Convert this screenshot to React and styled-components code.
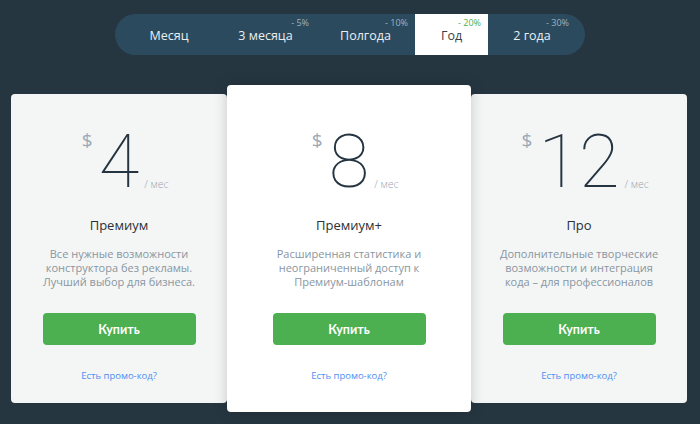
import React from "react";
import styled, { createGlobalStyle } from "styled-components";

const Global = createGlobalStyle`
  html, body { margin: 0; padding: 0; background: #263641; }
  body { font-family: "Open Sans", "Liberation Sans", sans-serif; width: 700px; height: 424px; overflow: hidden; }
`;

const Page = styled.div`
  display: flex;
  flex-direction: column;
  align-items: center;
  padding-top: 14px;
`;

const Tabs = styled.div`
  display: flex;
  height: 41px;
  padding: 0 9px 0 8px;
  border-radius: 21px;
  background: #2c4a5d;
`;

const Tab = styled.div`
  position: relative;
  display: flex;
  align-items: center;
  justify-content: center;
  width: ${(p) => p.$w}px;
  padding-top: 1px;
  box-sizing: border-box;
  font-size: 12.5px;
  color: ${(p) => (p.$active ? "#3a3f44" : "#e9eff3")};
  background: ${(p) => (p.$active ? "#ffffff" : "transparent")};
`;

const Discount = styled.span`
  position: absolute;
  top: 2px;
  right: 7px;
  font-size: 9px;
  color: ${(p) => (p.$active ? "#4caf50" : "#9fb2c0")};
`;

const Cards = styled.div`
  display: flex;
  align-items: stretch;
  margin-top: 39px;
  margin-left: -2px;
`;

const Card = styled.div`
  position: relative;
  z-index: ${(p) => (p.$featured ? 1 : 0)};
  width: ${(p) => (p.$featured ? 244 : 216)}px;
  margin: ${(p) => (p.$featured ? "-9px 0" : "0")};
  padding: ${(p) => (p.$featured ? "40px 0 29px" : "31px 0 20px")};
  background: ${(p) => (p.$featured ? "#ffffff" : "#f4f5f5")};
  border-radius: 4px;
  box-shadow: ${(p) => (p.$featured ? "0 0 14px rgba(0,0,0,0.18)" : "none")};
  display: flex;
  flex-direction: column;
  align-items: center;
`;

const Price = styled.div`
  position: relative;
  font-family: "Roboto", sans-serif;
  font-weight: 100;
  font-size: 74px;
  line-height: 73px;
  color: #243441;
`;

const Currency = styled.span`
  position: absolute;
  right: 100%;
  top: 6px;
  margin-right: 6px;
  font-family: "Open Sans", sans-serif;
  font-weight: 400;
  font-size: 19px;
  line-height: 19px;
  color: #98a9b8;
`;

const Per = styled.span`
  position: absolute;
  left: 100%;
  bottom: 8px;
  margin-left: 5px;
  white-space: nowrap;
  font-family: "Open Sans", sans-serif;
  font-size: 10.5px;
  line-height: 12px;
  color: #98a5b0;
`;

const Title = styled.div`
  margin-top: 19px;
  font-size: 13px;
  line-height: 16px;
  color: #2b3036;
`;

const Desc = styled.div`
  margin-top: 14px;
  font-size: 11px;
  line-height: 14px;
  color: #8896a1;
  text-align: center;
  white-space: nowrap;
`;

const Buy = styled.button`
  margin-top: 24px;
  width: 153px;
  height: 32px;
  border: none;
  border-radius: 4px;
  background: #4caf50;
  color: #ffffff;
  font-family: "Lato", "Open Sans", sans-serif;
  font-weight: 700;
  font-size: 12.5px;
  cursor: pointer;
`;

const Promo = styled.a`
  margin-top: 24px;
  font-size: 9.5px;
  line-height: 14px;
  color: #4f8ff0;
  text-decoration: none;
`;

const tabs = [
  { label: "Месяц", w: 92 },
  { label: "3 месяца", off: "- 5%", w: 101 },
  { label: "Полгода", off: "- 10%", w: 99 },
  { label: "Год", off: "- 20%", active: true, w: 73 },
  { label: "2 года", off: "- 30%", w: 88 },
];

const plans = [
  {
    price: "4",
    title: "Премиум",
    desc: ["Все нужные возможности", "конструктора без рекламы.", "Лучший выбор для бизнеса."],
  },
  {
    price: "8",
    title: "Премиум+",
    desc: ["Расширенная статистика и", "неограниченный доступ к", "Премиум-шаблонам"],
    featured: true,
  },
  {
    price: "12",
    title: "Про",
    desc: ["Дополнительные творческие", "возможности и интеграция", "кода – для профессионалов"],
  },
];

export default function App() {
  return (
    <>
      <Global />
      <Page>
        <Tabs>
          {tabs.map((t) => (
            <Tab key={t.label} $active={t.active} $w={t.w}>
              {t.label}
              {t.off && <Discount $active={t.active}>{t.off}</Discount>}
            </Tab>
          ))}
        </Tabs>
        <Cards>
          {plans.map((p) => (
            <Card key={p.title} $featured={p.featured}>
              <Price>
                <Currency>$</Currency>
                {p.price}
                <Per>/ мес</Per>
              </Price>
              <Title>{p.title}</Title>
              <Desc>
                {p.desc.map((l, i) => (
                  <div key={i}>{l}</div>
                ))}
              </Desc>
              <Buy>Купить</Buy>
              <Promo href="#">Есть промо-код?</Promo>
            </Card>
          ))}
        </Cards>
      </Page>
    </>
  );
}
